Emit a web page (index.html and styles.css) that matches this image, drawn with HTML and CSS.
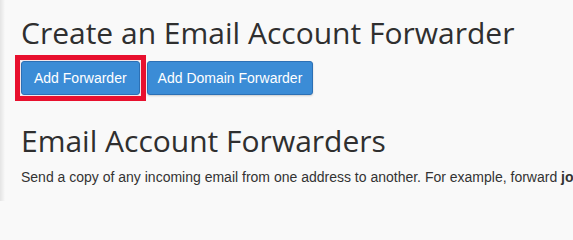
FILE: index.html
```html
<!DOCTYPE html>
<html lang="en">
<head>
<meta charset="utf-8">
<title>Forwarders</title>
<link rel="stylesheet" href="styles.css">
</head>
<body>
<div class="page">
  <main class="content">
    <h1 class="title">Create an Email Account Forwarder</h1>
    <div class="actions">
      <button class="btn btn-primary is-highlighted" type="button">Add Forwarder</button>
      <button class="btn btn-primary btn-domain" type="button">Add Domain Forwarder</button>
    </div>
    <h2 class="title section-title">Email Account Forwarders</h2>
    <p class="description">Send a copy of any incoming email from one address to another. For example, forward <strong>jo</strong></p>
  </main>
</div>
</body>
</html>
```

FILE: styles.css
```css
html, body {
  margin: 0;
  padding: 0;
  background: #f9f9f9;
  overflow: hidden;
}

.page {
  height: 201px;
  background: linear-gradient(to right, #e4e4e4 0, #ececec 2px, #f4f4f4 4px, #f9f9f9 5px);
}

.content {
  padding: 16px 0 0 21px;
  color: #333333;
}

.title {
  margin: 0;
  font-family: "Open Sans", sans-serif;
  font-weight: 400;
  font-size: 30px;
  line-height: 33px;
  color: #2f2f2f;
  white-space: nowrap;
}

.actions {
  display: flex;
  gap: 7px;
  margin-top: 12px;
}

.btn {
  font-family: "Liberation Sans", Arial, sans-serif;
  font-size: 14px;
  line-height: 20px;
  padding: 6px 12px;
  height: 34px;
  border-radius: 3px;
  border: 1px solid #2c70b5;
  cursor: pointer;
}

.btn-primary {
  background: #3b8cd6;
  color: #ffffff;
  box-shadow: 0 1px 2px rgba(0, 0, 0, 0.18);
}

.btn-domain {
  padding: 6px 10px 6px 10px;
}

.is-highlighted {
  position: relative;
  box-shadow: none;
}

.is-highlighted::after {
  content: "";
  position: absolute;
  top: -7px;
  left: -7px;
  right: -7px;
  bottom: -7px;
  border: 5px solid #e8102e;
  box-shadow: inset 0 0 0 1px #f3e6ea;
  pointer-events: none;
}

.section-title {
  margin-top: 29px;
}

.description {
  margin: 10px 0 0;
  font-family: "Liberation Sans", Arial, sans-serif;
  font-size: 14px;
  line-height: 20px;
  color: #333333;
  white-space: nowrap;
}

.description strong {
  font-weight: 700;
}
```
